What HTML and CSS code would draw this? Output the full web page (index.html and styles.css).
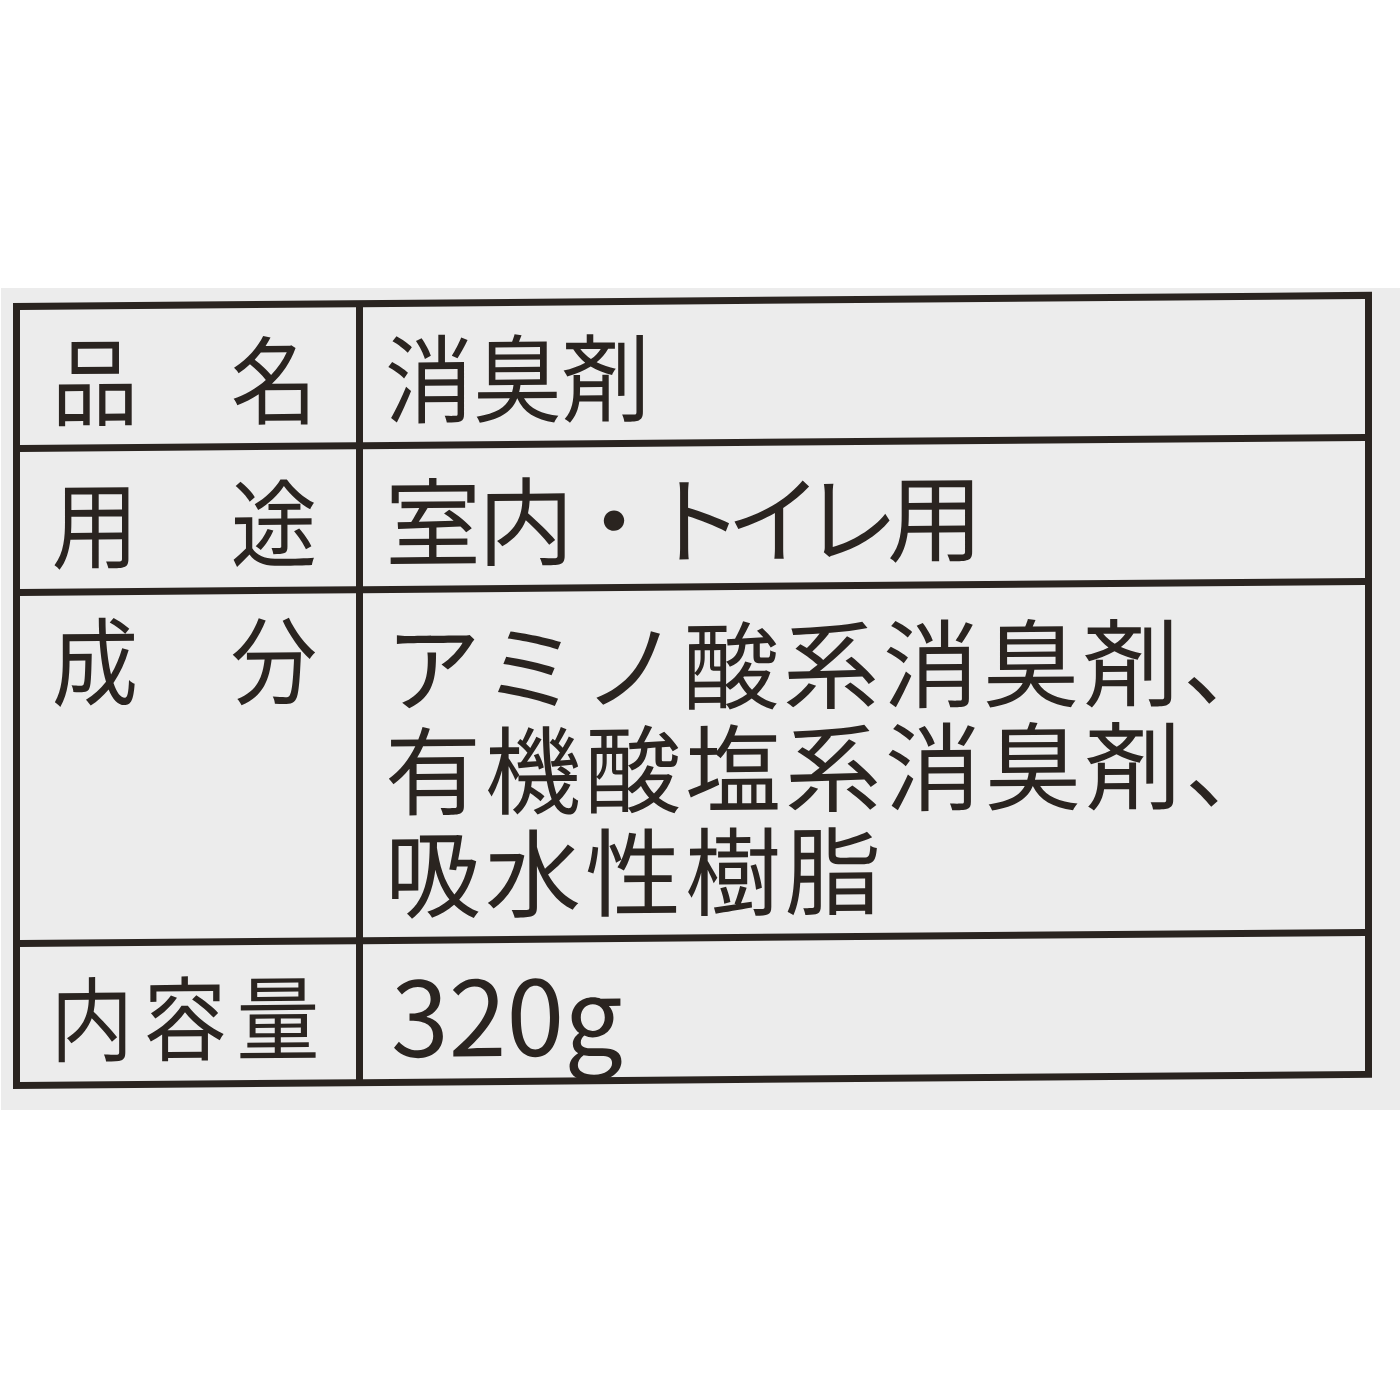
FILE: index.html
```html
<!DOCTYPE html>
<html lang="ja">
<head>
<meta charset="utf-8">
<title>表示ラベル</title>
<link rel="stylesheet" href="styles.css">
</head>
<body>
<div class="paper">
  <div class="spec">
    <div class="cell key"><span>品</span><span>名</span></div>
    <div class="cell val"><span class="cond">消臭剤</span></div>
    <div class="cell key"><span>用</span><span>途</span></div>
    <div class="cell val"><span class="tight-a">室</span><span class="tight-b">内</span>・<span class="prop">トイレ</span>用</div>
    <div class="cell key top"><span>成</span><span>分</span></div>
    <div class="cell val multi">
      <div class="line">アミノ酸系消臭剤、</div>
      <div class="line">有機酸塩系消臭剤、</div>
      <div class="line">吸水性樹脂</div>
    </div>
    <div class="cell key three"><span>内</span><span>容</span><span>量</span></div>
    <div class="cell val num">320g</div>
  </div>
</div>
</body>
</html>
```

FILE: styles.css
```css
html, body {
  margin: 0;
  padding: 0;
  background: #ffffff;
}

body {
  width: 1400px;
  height: 1400px;
  font-family: "Noto Sans CJK JP", "Noto Sans", sans-serif;
  color: #2a2420;
}

.paper {
  margin-top: 288px;
  margin-left: 1px;
  height: 822px;
  background: #ececec;
  padding-top: 15px;
  padding-left: 12px;
  box-sizing: border-box;
}

.spec {
  display: grid;
  grid-template-columns: 336px 1002px;
  grid-template-rows: 135px 137px 344px 135px;
  gap: 7px;
  padding: 7px;
  width: max-content;
  background: #2a2420;
  transform: skewY(-0.47deg);
  transform-origin: 0 0;
}

.cell {
  background: #ececec;
  font-size: 96px;
  line-height: 1;
  display: flex;
  align-items: center;
}

.key {
  justify-content: space-between;
  padding: 0 34px 0 27px;
}

.key span {
  display: inline-block;
  transform: scaleX(0.9);
}

.key.top {
  align-items: flex-start;
  padding-top: 10px;
  line-height: 103px;
}

.key.three {
  font-size: 92px;
  padding: 0 32px 0 26px;
}

.val {
  padding-left: 22px;
}

.cond {
  display: inline-block;
  transform: scaleX(0.92);
  transform-origin: 0 50%;
}

.tight-a {
  letter-spacing: -3px;
}

.tight-b {
  letter-spacing: -8px;
}

.prop {
  font-feature-settings: "palt" 1;
  letter-spacing: -6px;
}

.val.multi {
  flex-direction: column;
  align-items: flex-start;
  padding-top: 19px;
}

.line {
  line-height: 103px;
  letter-spacing: 4px;
  white-space: nowrap;
}

.num {
  font-size: 104px;
  padding-left: 28px;
}
```
